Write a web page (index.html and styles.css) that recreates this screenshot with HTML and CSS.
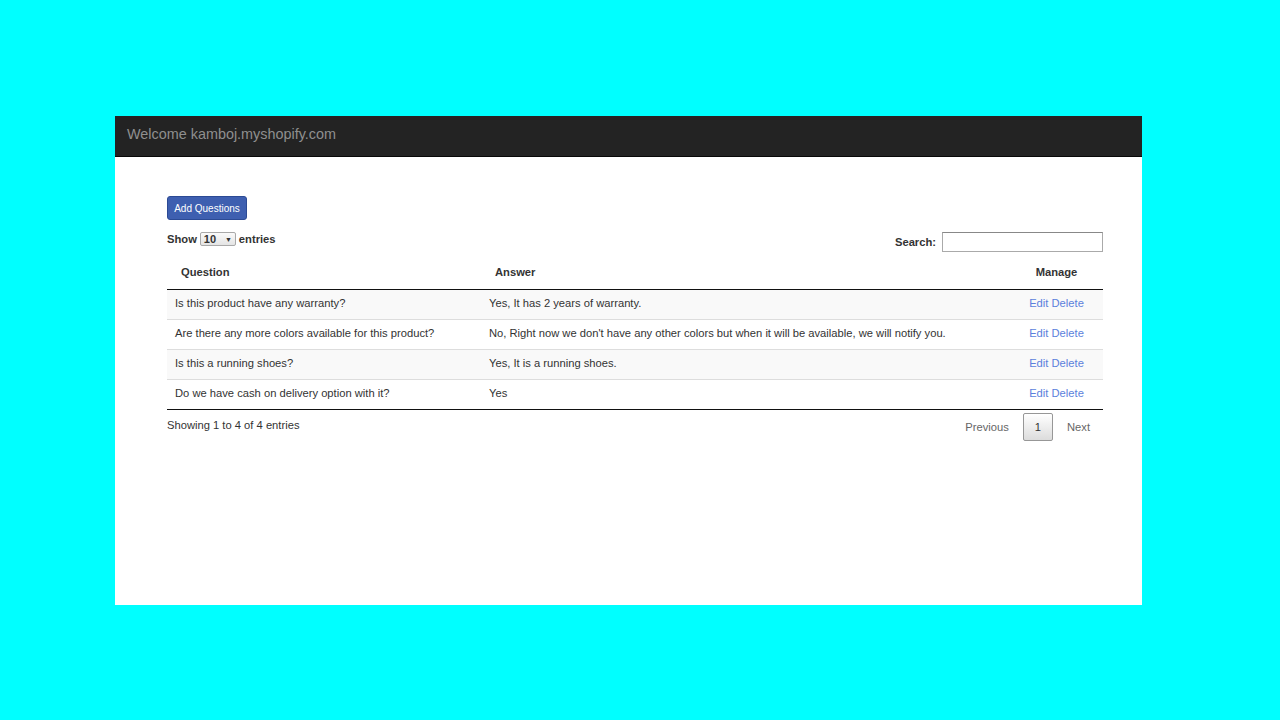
FILE: index.html
```html
<!DOCTYPE html>
<html lang="en">
<head>
  <meta charset="UTF-8">
  <title>FAQ Manager</title>
  <link rel="stylesheet" href="styles.css">
</head>
<body>
  <div class="panel">
    <div class="navbar">Welcome kamboj.myshopify.com</div>

    <div class="content">
      <button class="btn-add">Add Questions</button>

      <div class="table-tools">
        <label class="length">Show
          <span class="select">10 <span class="caret">&#9660;</span></span>
          entries</label>
        <label class="search">Search: <input type="text"></label>
      </div>

      <table class="questions">
        <thead>
          <tr>
            <th class="col-q">Question</th>
            <th class="col-a">Answer</th>
            <th class="col-m">Manage</th>
          </tr>
        </thead>
        <tbody>
          <tr class="odd">
            <td>Is this product have any warranty?</td>
            <td>Yes, It has 2 years of warranty.</td>
            <td class="col-m"><a href="#">Edit</a> <a href="#">Delete</a></td>
          </tr>
          <tr>
            <td>Are there any more colors available for this product?</td>
            <td>No, Right now we don't have any other colors but when it will be available, we will notify you.</td>
            <td class="col-m"><a href="#">Edit</a> <a href="#">Delete</a></td>
          </tr>
          <tr class="odd">
            <td>Is this a running shoes?</td>
            <td>Yes, It is a running shoes.</td>
            <td class="col-m"><a href="#">Edit</a> <a href="#">Delete</a></td>
          </tr>
          <tr>
            <td>Do we have cash on delivery option with it?</td>
            <td>Yes</td>
            <td class="col-m"><a href="#">Edit</a> <a href="#">Delete</a></td>
          </tr>
        </tbody>
      </table>

      <div class="table-footer">
        <div class="info">Showing 1 to 4 of 4 entries</div>
        <div class="paging">
          <span class="page-link">Previous</span>
          <span class="page-link current">1</span>
          <span class="page-link next">Next</span>
        </div>
      </div>
    </div>
  </div>
</body>
</html>
```

FILE: styles.css
```css
body {
  margin: 0;
  background: #00ffff;
  font-family: "Liberation Sans", Arial, sans-serif;
  color: #333;
  padding-top: 116px;
}

.panel {
  width: 1027px;
  height: 489px;
  margin-left: 115px;
  background: #fff;
}

.navbar {
  height: 40px;
  line-height: 37px;
  background: #232323;
  border-bottom: 1px solid #080808;
  color: #8f8f8f;
  font-size: 14.4px;
  padding-left: 12px;
}

.content {
  padding: 39px 39px 0 52px;
}

.btn-add {
  display: block;
  background: #3e5fb0;
  color: #fff;
  border: 1px solid #2c4a94;
  border-radius: 3px;
  font-family: inherit;
  font-size: 10px;
  width: 80px;
  height: 24px;
  padding: 0;
}

.table-tools {
  display: flex;
  justify-content: space-between;
  font-size: 11.2px;
  font-weight: bold;
  margin-top: 12px;
  height: 22px;
}

.length {
  display: flex;
  align-items: center;
  gap: 3px;
  height: 14px;
}

.select {
  display: inline-flex;
  align-items: center;
  justify-content: space-between;
  width: 28px;
  height: 12px;
  padding: 0 3px;
  border: 1px solid #a9a9a9;
  border-radius: 2px;
  background: linear-gradient(#fafafa, #e4e4e4);
  font-size: 11px;
}

.caret {
  font-size: 7px;
}

.search {
  display: flex;
  align-items: center;
  gap: 6px;
  height: 20px;
}

.search input {
  width: 155px;
  height: 16px;
  border: 1px solid #aaa;
  border-top-color: #888;
  padding: 1px 2px;
}

.questions {
  width: 100%;
  table-layout: fixed;
  border-collapse: collapse;
  font-size: 11.2px;
}

.questions th {
  font-weight: bold;
  text-align: left;
  padding: 0 18px 0 14px;
  height: 35px;
  vertical-align: middle;
  border-bottom: 1px solid #111;
}

.questions td {
  padding: 0 8px 3px;
  height: 26px;
  border-top: 1px solid #ddd;
  white-space: nowrap;
}

.questions tbody tr:first-child td {
  border-top: 1px solid #111;
}

.questions tbody tr:last-child td {
  border-bottom: 1px solid #111;
}

.questions tr.odd {
  background: #f9f9f9;
}

.questions .col-q {
  width: 282px;
}

.questions th.col-m,
.questions td.col-m {
  width: 77px;
  text-align: center;
  padding-left: 8px;
  padding-right: 8px;
}

.questions a {
  color: #5b7fdc;
  text-decoration: none;
}

.table-footer {
  display: flex;
  justify-content: space-between;
  font-size: 11.2px;
  padding-top: 9px;
}

.paging {
  display: flex;
  align-items: center;
  margin-top: -6px;
}

.page-link {
  padding: 7px 13px;
  color: #666;
  border: 1px solid transparent;
  border-radius: 2px;
}

.page-link.current {
  color: #333;
  padding: 7px 11px;
  border-color: #979797;
  background: linear-gradient(#fff, #dcdcdc);
}

.page-link.next {
  padding-right: 12px;
}
```
